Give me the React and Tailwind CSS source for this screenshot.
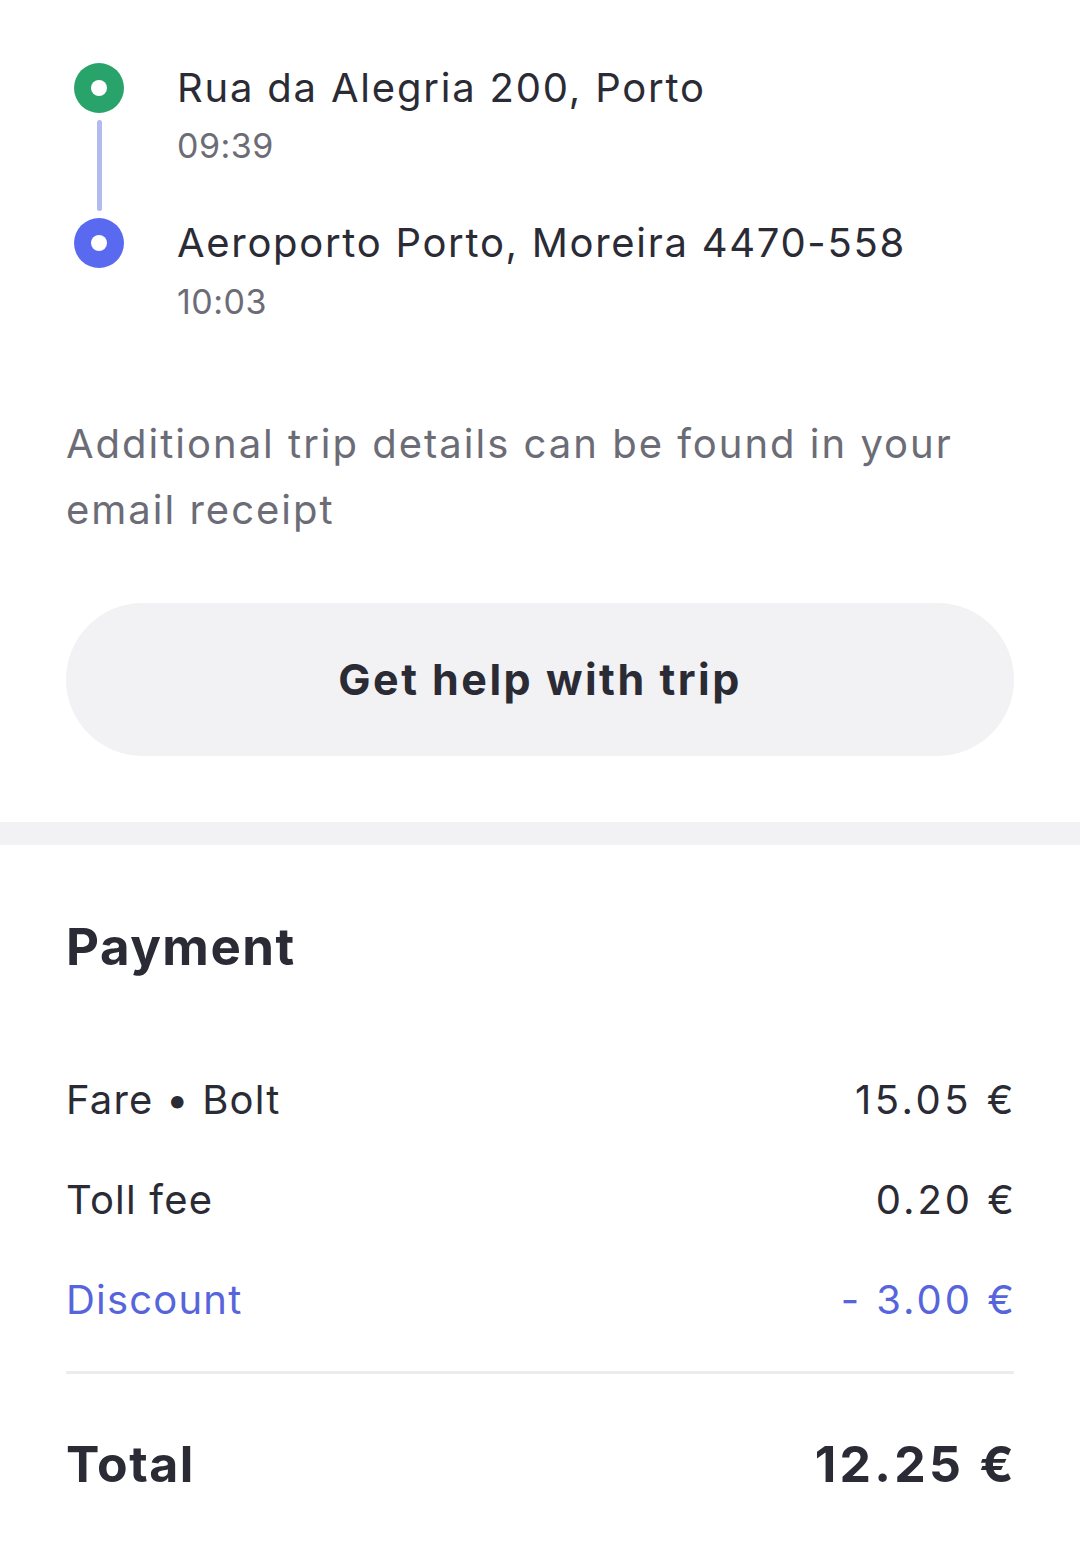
export default function App() {
  const font = { fontFamily: "Inter, 'Noto Sans', sans-serif" };
  return (
    <div className="min-h-[1555px] w-[1080px] bg-white text-[#2b2b35]" style={font}>
      <div className="px-[66px]">
        <div className="flex pl-[8px] pt-[63px]">
          <div className="flex w-[50px] flex-col items-center">
            <span className="flex h-[50px] w-[50px] items-center justify-center rounded-full bg-[#28a36a]">
              <span className="h-[16px] w-[16px] rounded-full bg-white" />
            </span>
            <span className="my-[7px] h-[91px] w-[5px] rounded-full bg-[#b2baf0]" />
            <span className="flex h-[50px] w-[50px] items-center justify-center rounded-full bg-[#5a6af0]">
              <span className="h-[16px] w-[16px] rounded-full bg-white" />
            </span>
          </div>
          <div className="ml-[53px] flex flex-col">
            <p className="text-[40px] leading-[50px] tracking-[1.8px]">Rua da Alegria 200, Porto</p>
            <p className="mt-[4px] text-[34px] leading-[58px] tracking-[0.5px] text-[#6c6c76]">09:39</p>
            <p className="mt-[43px] text-[40px] leading-[50px] tracking-[1.7px]">Aeroporto Porto, Moreira 4470-558</p>
            <p className="mt-[5px] text-[34px] leading-[58px] tracking-[0.5px] text-[#6c6c76]">10:03</p>
          </div>
        </div>

        <p className="mt-[80px] text-[40px] leading-[66px] tracking-[2px] text-[#6c6c76]">
          Additional trip details can be found in your email receipt
        </p>

        <button
          type="button"
          className="mt-[60px] flex h-[153px] w-full items-center justify-center rounded-full bg-[#f2f2f4] text-[43px] font-bold tracking-[2.5px] text-[#2b2b35]"
        >
          Get help with trip
        </button>
      </div>

      <div className="mt-[66px] h-[23px] w-full bg-[#f2f2f4]" />

      <div className="px-[66px]">
        <h2 className="mt-[72px] text-[51px] font-bold leading-[60px] tracking-[1.5px]">Payment</h2>

        <div className="mt-[73px] flex flex-col text-[40px]">
          <div className="flex h-[100px] items-center justify-between">
            <span className="tracking-[1.2px]">Fare • Bolt</span>
            <span className="-mr-[3px] tracking-[3.5px]">15.05 €</span>
          </div>
          <div className="flex h-[100px] items-center justify-between">
            <span className="tracking-[1.2px]">Toll fee</span>
            <span className="-mr-[3px] tracking-[3px]">0.20 €</span>
          </div>
          <div className="flex h-[100px] items-center justify-between text-[#5765dc]">
            <span className="tracking-[1.2px]">Discount</span>
            <span className="-mr-[3px] tracking-[3px]">- 3.00 €</span>
          </div>
        </div>

        <div className="mt-[21px] h-[3px] w-full bg-[#ececee]" />

        <div className="mt-[60px] flex items-center justify-between text-[50px] font-bold leading-[60px]">
          <span className="tracking-[1.5px]">Total</span>
          <span className="-mr-[3px] tracking-[3.3px]">12.25 €</span>
        </div>
      </div>
    </div>
  );
}
